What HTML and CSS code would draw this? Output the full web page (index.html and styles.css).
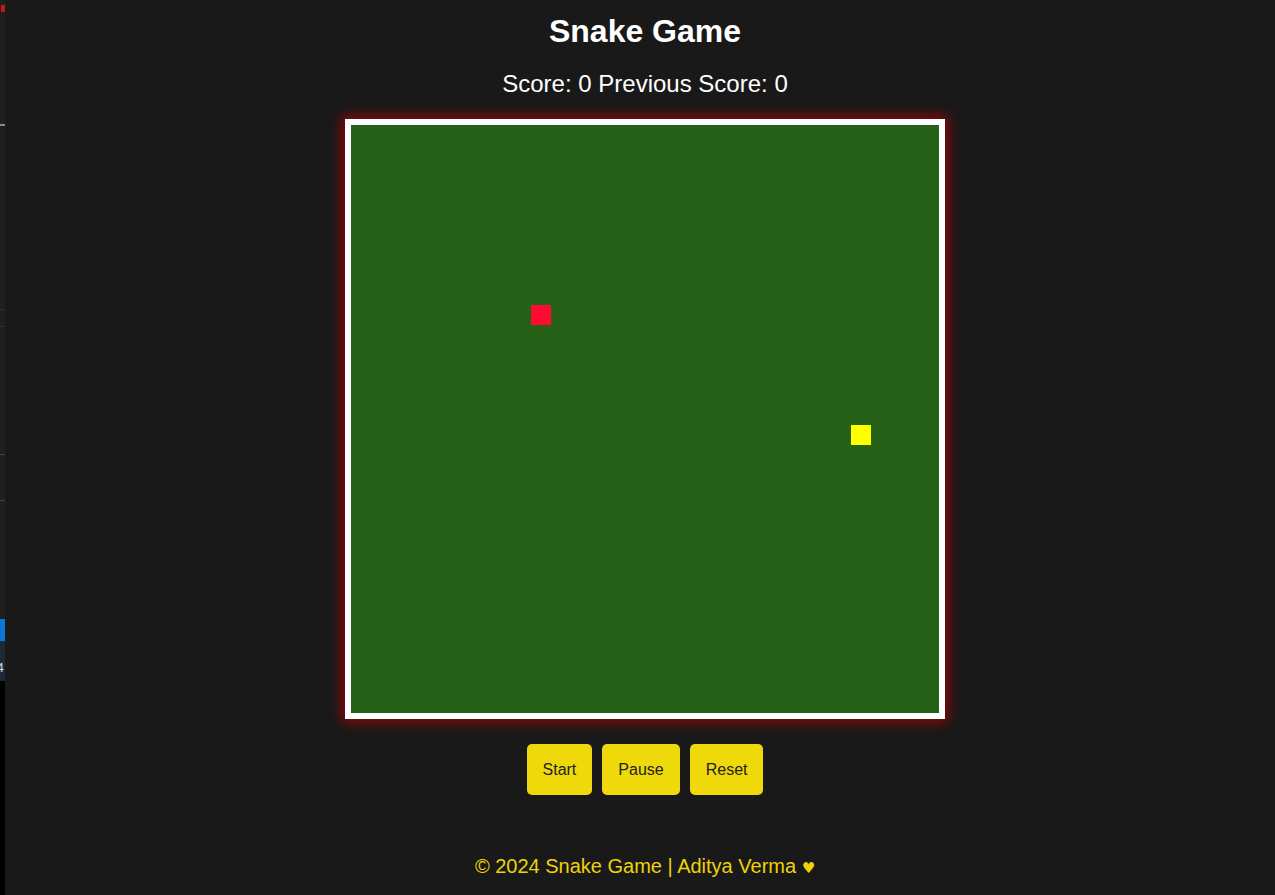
FILE: index.html
```html
<!DOCTYPE html>
<html lang="en">
<head>
<meta charset="utf-8">
<title>Snake Game</title>
<link rel="stylesheet" href="styles.css">
</head>
<body>
<div class="edge">
  <div class="edge-top">
    <div class="edge-red"></div>
    <div class="edge-line edge-line-a"></div>
    <div class="edge-line edge-line-b"></div>
    <div class="edge-line edge-line-c"></div>
    <div class="edge-line edge-line-d"></div>
    <div class="edge-line edge-line-e"></div>
  </div>
  <div class="edge-blue"></div>
  <div class="edge-status">4</div>
  <div class="edge-black"></div>
</div>
<main class="game">
  <h1 class="title">Snake Game</h1>
  <div class="score">Score: <span>0</span> Previous Score: <span>0</span></div>
  <div class="board">
    <div class="cell food" style="left:180px;top:180px"></div>
    <div class="cell snake" style="left:500px;top:300px"></div>
  </div>
  <div class="controls">
    <button class="btn">Start</button>
    <button class="btn">Pause</button>
    <button class="btn">Reset</button>
  </div>
  <footer class="footer">© 2024 Snake Game | Aditya Verma <span class="heart">♥</span></footer>
</main>
</body>
</html>
```
FILE: styles.css
```css
html, body {
  margin: 0;
  padding: 0;
  height: 100%;
}
body {
  background: #191919;
  display: flex;
  font-family: "Liberation Sans", Arial, sans-serif;
  color: #ffffff;
  overflow: hidden;
}
.edge {
  width: 5px;
  flex: none;
  display: flex;
  flex-direction: column;
  background: #1f1f1f;
}
.edge-top {
  height: 619px;
  position: relative;
}
.edge-red {
  position: absolute;
  left: 1px;
  top: 5px;
  width: 4px;
  height: 7px;
  background: #c4161c;
}
.edge-line {
  position: absolute;
  left: 0;
  width: 5px;
  height: 1px;
  background: #3a3a3a;
}
.edge-line-a { top: 124px; height: 2px; background: #8a8a8a; }
.edge-line-b { top: 309px; background: #2d2d2d; }
.edge-line-c { top: 326px; background: #2d2d2d; }
.edge-line-d { top: 454px; background: #444; }
.edge-line-e { top: 500px; background: #444; }
.edge-blue {
  height: 22px;
  background: #0a78d4;
}
.edge-status {
  height: 40px;
  box-sizing: border-box;
  padding-top: 20px;
  background: #1d2935;
  color: #dfe6ee;
  font-size: 12px;
  line-height: 14px;
  text-indent: -3px;
  overflow: hidden;
}
.edge-black {
  flex: 1;
  background: #000;
}
.game {
  flex: 1;
  padding: 13px 0 0 10px;
  display: flex;
  flex-direction: column;
  align-items: center;
}
.title {
  margin: 0;
  font-size: 32px;
  line-height: 37px;
  font-weight: bold;
}
.score {
  margin-top: 20px;
  font-size: 24px;
  line-height: 28px;
}
.board {
  margin-top: 21px;
  width: 588px;
  height: 588px;
  border: 6px solid #ffffff;
  background: #266118;
  position: relative;
  box-shadow: 0 0 12px 3px rgba(175, 0, 0, 0.8);
}
.cell {
  position: absolute;
  width: 20px;
  height: 20px;
}
.food { background: #ff0a33; }
.snake { background: #ffff00; }
.controls {
  margin-top: 25px;
  display: flex;
  gap: 10px;
}
.btn {
  font-family: "Liberation Sans", Arial, sans-serif;
  font-size: 16px;
  line-height: 19px;
  padding: 16px 16px;
  background: #efd90a;
  color: #222;
  border: none;
  border-radius: 5px;
}
.footer {
  margin-top: 60px;
  font-size: 20px;
  line-height: 23px;
  color: #efd20a;
}
.heart {
  font-family: "DejaVu Sans", sans-serif;
  font-size: 15px;
}
```
